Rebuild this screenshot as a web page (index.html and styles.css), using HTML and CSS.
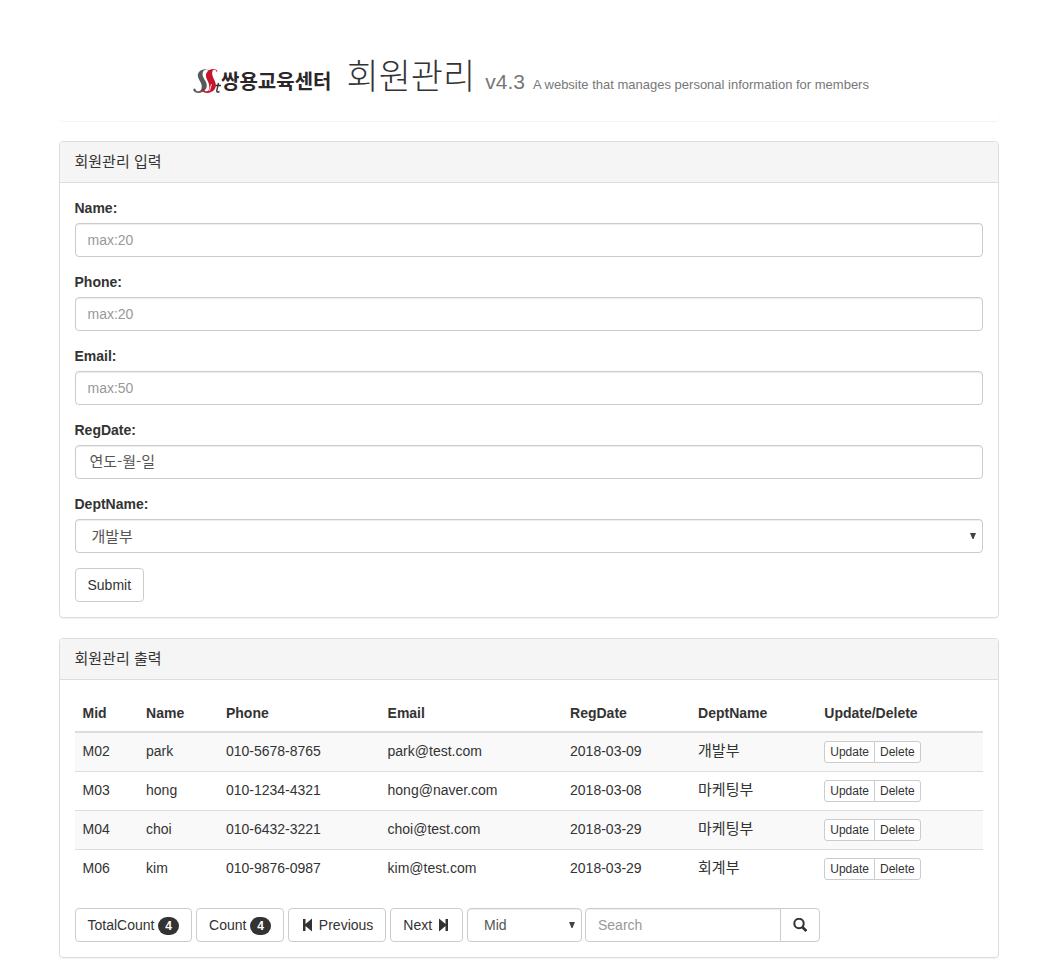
FILE: index.html
```html
<!DOCTYPE html>
<html lang="ko">
<head>
<meta charset="utf-8">
<meta name="viewport" content="width=device-width, initial-scale=1">
<title>회원관리</title>
<link rel="stylesheet" href="styles.css">
</head>
<body>
<div class="container">
  <header class="page-head">
    <div class="logo">
      <svg class="logo-mark" viewBox="0 0 28 26" width="28" height="26" aria-hidden="true">
        <path d="M16.5 3.500C15.500 .5 9 0 6 4C2.500 9 7.500 12 8.500 16.500C9.300 20.500 8 23 6 23.300C4 23.500 2.500 22.500 2.500 21C1 19.500 -.5 21.500 .8 23C3 26 9.500 25.500 12.500 21.500C16 16 11.500 12.500 10 8.500C8.500 4 11 1.500 13.500 1.800C14.500 2 15 2.500 15.500 3.800Z" fill="#58595b"/>
        <path d="M24.500 3.500C24 .5 18 0 14.500 3.500C10.500 8 15 12 16 16.500C16.800 20.500 16 23 14 23.300C12 23.500 11 22.500 11 21C9.500 19.800 8.300 21.500 9.300 23C11.500 26 18.500 25.500 21.500 21.500C25 16.500 21 12.500 19.800 8.500C18.500 4 19.500 1.700 21.500 1.800C22.500 2 23 2.500 23.500 3.800Z" fill="#c8142b"/>
        <path d="M25.500 15L23.800 22.500Q23.500 25 26.500 23.500M22.500 17.500H28" fill="none" stroke="#333" stroke-width="1.400"/>
        <path d="M18.500 16L16.500 23" fill="none" stroke="#fff" stroke-width=".8"/>
      </svg>
      <span class="logo-text">쌍용교육센터</span>
    </div>
    <h1 class="title">회원관리</h1>
    <span class="version">v4.3</span>
    <span class="tagline">A website that manages personal information for members</span>
  </header>

  <section class="panel">
    <h2 class="panel-heading">회원관리 입력</h2>
    <form class="panel-body">
      <div class="form-group">
        <label for="name">Name:</label>
        <input class="control" type="text" id="name" placeholder="max:20">
      </div>
      <div class="form-group">
        <label for="phone">Phone:</label>
        <input class="control" type="text" id="phone" placeholder="max:20">
      </div>
      <div class="form-group">
        <label for="email">Email:</label>
        <input class="control" type="email" id="email" placeholder="max:50">
      </div>
      <div class="form-group">
        <label for="regdate">RegDate:</label>
        <input class="control control-date" type="text" id="regdate" placeholder="연도-월-일">
      </div>
      <div class="form-group">
        <label for="dept">DeptName:</label>
        <div class="select-wrap">
          <select class="control select-ko" id="dept">
            <option>개발부</option>
            <option>마케팅부</option>
            <option>회계부</option>
          </select>
          <svg class="caret" viewBox="0 0 6 6" width="6" height="6" aria-hidden="true"><path d="M0 0H6L3.500 6H2.500Z" fill="#444"/></svg>
        </div>
      </div>
      <button class="btn" type="button">Submit</button>
    </form>
  </section>

  <section class="panel">
    <h2 class="panel-heading">회원관리 출력</h2>
    <div class="panel-body">
      <table class="table">
        <colgroup>
          <col class="col-mid"><col class="col-name"><col class="col-phone"><col class="col-email"><col class="col-date"><col class="col-dept"><col>
        </colgroup>
        <thead>
          <tr><th>Mid</th><th>Name</th><th>Phone</th><th>Email</th><th>RegDate</th><th>DeptName</th><th>Update/Delete</th></tr>
        </thead>
        <tbody>
          <tr><td>M02</td><td>park</td><td>010-5678-8765</td><td>park@test.com</td><td>2018-03-09</td><td class="ko">개발부</td>
            <td><div class="btn-group"><button class="btn-xs" type="button">Update</button><button class="btn-xs" type="button">Delete</button></div></td></tr>
          <tr><td>M03</td><td>hong</td><td>010-1234-4321</td><td>hong@naver.com</td><td>2018-03-08</td><td class="ko">마케팅부</td>
            <td><div class="btn-group"><button class="btn-xs" type="button">Update</button><button class="btn-xs" type="button">Delete</button></div></td></tr>
          <tr><td>M04</td><td>choi</td><td>010-6432-3221</td><td>choi@test.com</td><td>2018-03-29</td><td class="ko">마케팅부</td>
            <td><div class="btn-group"><button class="btn-xs" type="button">Update</button><button class="btn-xs" type="button">Delete</button></div></td></tr>
          <tr><td>M06</td><td>kim</td><td>010-9876-0987</td><td>kim@test.com</td><td>2018-03-29</td><td class="ko">회계부</td>
            <td><div class="btn-group"><button class="btn-xs" type="button">Update</button><button class="btn-xs" type="button">Delete</button></div></td></tr>
        </tbody>
      </table>

      <form class="toolbar">
        <button class="btn" type="button">TotalCount <span class="badge">4</span></button>
        <button class="btn" type="button">Count <span class="badge">4</span></button>
        <button class="btn" type="button"><svg class="step" viewBox="0 0 14 14" width="14" height="14" aria-hidden="true"><path d="M2 1H4.500V6L11 .5V13.500L4.500 8V13H2Z" fill="#333"/></svg> Previous</button>
        <button class="btn" type="button">Next <svg class="step" viewBox="0 0 14 14" width="14" height="14" aria-hidden="true"><path d="M12 1H9.500V6L3 .5V13.500L9.500 8V13H12Z" fill="#333"/></svg></button>
        <div class="select-wrap filter">
          <select class="control" aria-label="Search field">
            <option>Mid</option>
            <option>Name</option>
            <option>Phone</option>
          </select>
          <svg class="caret" viewBox="0 0 6 6" width="6" height="6" aria-hidden="true"><path d="M0 0H6L3.500 6H2.500Z" fill="#444"/></svg>
        </div>
        <div class="search">
          <input class="control" type="text" placeholder="Search" aria-label="Search">
          <button class="btn" type="button" aria-label="Search"><svg class="lens" viewBox="0 0 14 14" width="14" height="14" aria-hidden="true"><circle cx="6" cy="5.500" r="4.700" fill="none" stroke="#333" stroke-width="2"/><path d="M9.300 9L13.300 13" stroke="#333" stroke-width="2.600"/></svg></button>
        </div>
      </form>
    </div>
  </section>
</div>
</body>
</html>
```
FILE: styles.css
```css
* { box-sizing: border-box; }

body {
  margin: 0;
  background: #fff;
  color: #333;
  font: 14px/20px "Liberation Sans", Arial, "Noto Sans CJK KR", sans-serif;
}

button, input, select { font: inherit; }

.container {
  max-width: 970px;
  margin: 0 auto;
  padding: 40px 15px 0;
}

.page-head {
  display: flex;
  align-items: baseline;
  justify-content: center;
  padding: 14px 0 26px 5px;
  margin-bottom: 20px;
  border-radius: 4px;
  box-shadow: 0 1px 1px rgba(0, 0, 0, .05);
}

.logo {
  display: flex;
  align-items: baseline;
  margin-right: 15px;
}

.logo-mark { align-self: flex-end; }

.logo-text {
  font: 700 20px/26px "Noto Sans CJK KR", sans-serif;
  color: #2b2627;
}

.title {
  margin: 0 10px 0 0;
  font: 300 35px/40px "Noto Sans CJK KR", sans-serif;
}

.version {
  margin-right: 8px;
  font-size: 21px;
  color: #777;
}

.tagline {
  font-size: 13px;
  color: #777;
}

.panel {
  margin-bottom: 20px;
  border: 1px solid #ddd;
  border-radius: 4px;
  box-shadow: 0 1px 1px rgba(0, 0, 0, .05);
}

.panel-heading {
  margin: 0;
  padding: 9px 15px 11px;
  border-bottom: 1px solid #ddd;
  border-radius: 3px 3px 0 0;
  background: #f5f5f5;
  font: 400 15px/20px "Noto Sans CJK KR", sans-serif;
}

.panel-body { padding: 15px; }

.form-group { margin-bottom: 15px; }

.form-group label {
  display: block;
  margin-bottom: 5px;
  font-weight: 700;
}

.control {
  display: block;
  width: 100%;
  height: 34px;
  padding: 6px 12px;
  border: 1px solid #ccc;
  border-radius: 4px;
  background: #fff;
  color: #555;
  box-shadow: inset 0 1px 1px rgba(0, 0, 0, .075);
}

.control::placeholder { color: #999; opacity: 1; }

.control-date {
  padding: 5px 14px 9px;
  font: 400 15px/20px "Noto Sans CJK KR", sans-serif;
}

.control-date::placeholder { color: #555; }

.select-wrap { position: relative; }

.select-wrap select {
  appearance: none;
  padding-left: 16px;
}

.select-wrap .select-ko { font: 400 15px/20px "Noto Sans CJK KR", sans-serif; }

.caret {
  position: absolute;
  top: 14px;
  right: 7px;
  pointer-events: none;
}

.btn {
  height: 34px;
  padding: 6px 12px;
  border: 1px solid #ccc;
  border-radius: 4px;
  background: #fff;
  color: #333;
  white-space: nowrap;
}

.table {
  width: 100%;
  margin-bottom: 20px;
  border-collapse: collapse;
}

.col-mid { width: 7%; }
.col-name { width: 8.8%; }
.col-phone { width: 17.8%; }
.col-email { width: 20.1%; }
.col-date { width: 14.1%; }
.col-dept { width: 13.9%; }

.table th, .table td {
  padding: 8px;
  text-align: left;
  vertical-align: top;
}

.table th { border-bottom: 2px solid #ddd; }
.table td { border-top: 1px solid #ddd; }
.table tbody tr:nth-child(odd) { background: #f9f9f9; }

.table .ko {
  padding-top: 7px;
  font: 400 15px/20px "Noto Sans CJK KR", sans-serif;
}

.btn-group { display: flex; }

.btn-xs {
  height: 22px;
  padding: 1px 5px;
  border: 1px solid #ccc;
  border-radius: 3px 0 0 3px;
  background: #fff;
  color: #333;
  font-size: 12px;
  line-height: 18px;
}

.btn-xs + .btn-xs {
  margin-left: -1px;
  border-radius: 0 3px 3px 0;
}

.toolbar {
  display: flex;
  flex-wrap: wrap;
  gap: 4px;
}

.badge {
  display: inline-block;
  min-width: 10px;
  padding: 3px 7px;
  border-radius: 10px;
  background: #333;
  color: #fff;
  font-size: 12px;
  font-weight: 700;
  line-height: 12px;
  vertical-align: middle;
}

.step { vertical-align: -2px; }

.lens { display: block; }

.filter { width: 115px; }

.search {
  display: flex;
  width: 235px;
  margin-left: -1px;
}

.search .control {
  flex: 1;
  min-width: 0;
  border-radius: 4px 0 0 4px;
}

.search .btn {
  margin-left: -1px;
  border-radius: 0 4px 4px 0;
}
```
